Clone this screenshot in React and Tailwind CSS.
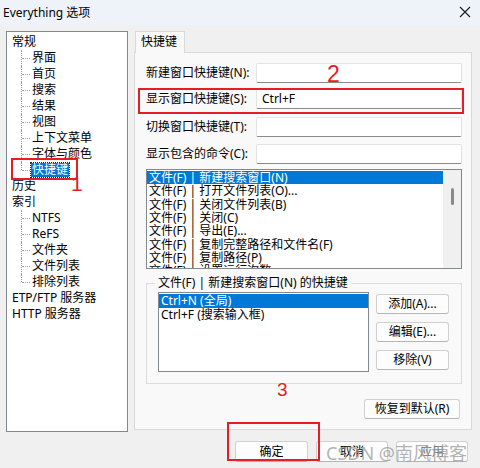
import React from 'react';

const tree = [
  { t: '常规', d: 0 },
  { t: '界面', d: 1 },
  { t: '首页', d: 1 },
  { t: '搜索', d: 1 },
  { t: '结果', d: 1 },
  { t: '视图', d: 1 },
  { t: '上下文菜单', d: 1 },
  { t: '字体与颜色', d: 1 },
  { t: '快捷键', d: 1, last: true, sel: true },
  { t: '历史', d: 0 },
  { t: '索引', d: 0 },
  { t: 'NTFS', d: 1 },
  { t: 'ReFS', d: 1 },
  { t: '文件夹', d: 1 },
  { t: '文件列表', d: 1 },
  { t: '排除列表', d: 1, last: true },
  { t: 'ETP/FTP 服务器', d: 0 },
  { t: 'HTTP 服务器', d: 0 },
];

const commands = [
  '新建搜索窗口(N)',
  '打开文件列表(O)...',
  '关闭文件列表(B)',
  '关闭(C)',
  '导出(E)...',
  '复制完整路径和文件名(F)',
  '复制路径(P)',
  '设置运行次数',
];

const fields = [
  { label: '新建窗口快捷键(N):', value: '', mt: 'mt-0' },
  { label: '显示窗口快捷键(S):', value: 'Ctrl+F', mt: 'mt-[6px]' },
  { label: '切换窗口快捷键(T):', value: '', mt: 'mt-[8px]' },
  { label: '显示包含的命令(C):', value: '', mt: 'mt-[7px]' },
];

const TreeRow = ({ item }) => {
  if (item.d === 0) {
    return <div className="h-[16px] leading-[16px] pl-[5px] whitespace-nowrap">{item.t}</div>;
  }
  return (
    <div className="relative h-[16px] leading-[16px] pl-[24px] whitespace-nowrap">
      <span
        className={
          'absolute left-[14px] top-0 border-l border-dotted border-[#a0a0a0] ' +
          (item.last ? 'h-[8px]' : 'h-[16px]')
        }
      />
      <span className="absolute left-[15px] top-[8px] w-[8px] border-t border-dotted border-[#a0a0a0]" />
      <span
        className={
          item.sel
            ? 'inline-block h-[14px] leading-[13px] px-[1px] bg-[#0078d7] text-white outline outline-1 outline-dotted outline-[#222]'
            : 'px-[1px]'
        }
      >
        {item.t}
      </span>
    </div>
  );
};

const Button = ({ children, className = '' }) => (
  <div
    className={
      'flex items-center justify-center h-[20px] rounded-[3px] border border-[#d0d0d0] border-b-[#b5b5b5] bg-[#fdfdfd] leading-[16px] ' +
      className
    }
  >
    {children}
  </div>
);

export default function App() {
  return (
    <div className="relative w-[480px] h-[468px] overflow-hidden bg-[#f0f0f0] text-[12px] text-black font-['Noto_Sans','Noto_Sans_CJK_SC',sans-serif]">
      {/* title bar */}
      <div className="flex items-center justify-between h-[25px] bg-[#eef3f9] pl-[3px] pr-[9px]">
        <span className="leading-[16px]">Everything 选项</span>
        <svg width="12" height="12" viewBox="0 0 12 12" className="mt-[-1px]">
          <path d="M1 1 L11 11 M11 1 L1 11" stroke="#1a1a1a" strokeWidth="1.1" />
        </svg>
      </div>

      <div className="flex pt-[6px] px-[6px]">
        {/* tree */}
        <div className="w-[122px] h-[401px] border border-[#828790] bg-white pt-[2px]">
          {tree.map((it, i) => (
            <TreeRow key={i} item={it} />
          ))}
        </div>

        {/* right side */}
        <div className="ml-[6px] w-[338px] flex flex-col">
          <div className="flex h-[21px]">
            <div className="ml-[1px] w-[50px] h-[22px] border border-b-0 border-[#d9d9d9] bg-[#f9f9f9] pl-[5px] leading-[20px] z-10">
              快捷键
            </div>
          </div>
          <div className="h-[378px] border border-[#d9d9d9] bg-[#f9f9f9] pt-[10px] pl-[11px] pr-[9px] flex flex-col">
            {fields.map((f, i) => (
              <div key={i} className={'flex items-center h-[20px] ' + f.mt}>
                <div className="w-[110px] whitespace-nowrap leading-[16px]">{f.label}</div>
                <div className="w-[206px] h-[20px] bg-white border border-[#e3e3e3] border-b-[#8a8a8a] rounded-[2px] pl-[5px] leading-[18px]">
                  {f.value}
                </div>
              </div>
            ))}

            {/* command list */}
            <div className="mt-[5px] w-[316px] h-[100px] border border-[#828790] bg-white flex overflow-hidden">
              <div className="flex-1 pt-[1px] overflow-hidden">
                {commands.map((c, i) => (
                  <div
                    key={i}
                    className={
                      'h-[13.33px] leading-[13.33px] pl-[2px] whitespace-nowrap ' +
                      (i === 0 ? 'bg-[#0078d7] text-white' : '')
                    }
                  >
                    文件(F) | {c}
                  </div>
                ))}
              </div>
              <div className="w-[18px] bg-[#f0f0f0] flex justify-center">
                <div className="mt-[18px] w-[3px] h-[17px] rounded-full bg-[#8a8a8a]" />
              </div>
            </div>

            {/* group box */}
            <fieldset className="mt-[6px] w-[316px] border border-[#dcdcdc] px-[11px] pb-[11px]">
              <legend className="-ml-[3px] px-[3px] leading-[16px]">文件(F) | 新建搜索窗口(N) 的快捷键</legend>
              <div className="flex mt-[1px]">
                <div className="w-[211px] h-[80px] border border-[#828790] bg-white pt-[1px]">
                  <div className="h-[14px] leading-[14px] pl-[2px] bg-[#0078d7] text-white">Ctrl+N (全局)</div>
                  <div className="h-[14px] leading-[14px] pl-[2px]">Ctrl+F (搜索输入框)</div>
                </div>
                <div className="ml-[7px] flex flex-col gap-[8px] pt-[2px]">
                  <Button className="w-[73px]">添加(A)...</Button>
                  <Button className="w-[73px]">编辑(E)...</Button>
                  <Button className="w-[73px]">移除(V)</Button>
                </div>
              </div>
            </fieldset>

            <div className="mt-auto mb-[10px] flex justify-end pr-[2px]">
              <Button className="w-[96px]">恢复到默认(R)</Button>
            </div>
          </div>
        </div>
      </div>

      {/* bottom buttons */}
      <div className="flex justify-end gap-[8px] pr-[12px] mt-[9px]">
        <Button className="w-[73px] h-[21px] border-[#0067c0] border-b-[#003e92]">确定</Button>
        <Button className="w-[72px] h-[21px]">取消</Button>
        <Button className="w-[72px] h-[21px] text-[#6d6d6d]">应用</Button>
      </div>

      {/* annotations */}
      <div className="absolute left-[11px] top-[158px] w-[67px] h-[22px] border-2 border-[#e81c24]" />
      <div className="absolute left-[71px] top-[172px] text-[21px] leading-[24px] text-[#e81c24] font-['Liberation_Sans',sans-serif] font-light">1</div>
      <div className="absolute left-[138px] top-[88px] w-[326px] h-[26px] border-2 border-[#e81c24]" />
      <div className="absolute left-[327px] top-[61px] text-[23px] leading-[26px] text-[#e81c24] font-['Liberation_Sans',sans-serif]">2</div>
      <div className="absolute left-[277px] top-[379px] text-[19px] leading-[22px] text-[#e81c24] font-['Liberation_Sans',sans-serif]">3</div>
      <div className="absolute left-[227px] top-[422px] w-[93px] h-[39px] border-2 border-[#e81c24]" />

      {/* watermark */}
      <div className="absolute left-[326px] top-[442px] text-[18px] leading-[22px] text-[#9a9a9a]/75 whitespace-nowrap">
        CSDN @南风博客
      </div>
    </div>
  );
}
